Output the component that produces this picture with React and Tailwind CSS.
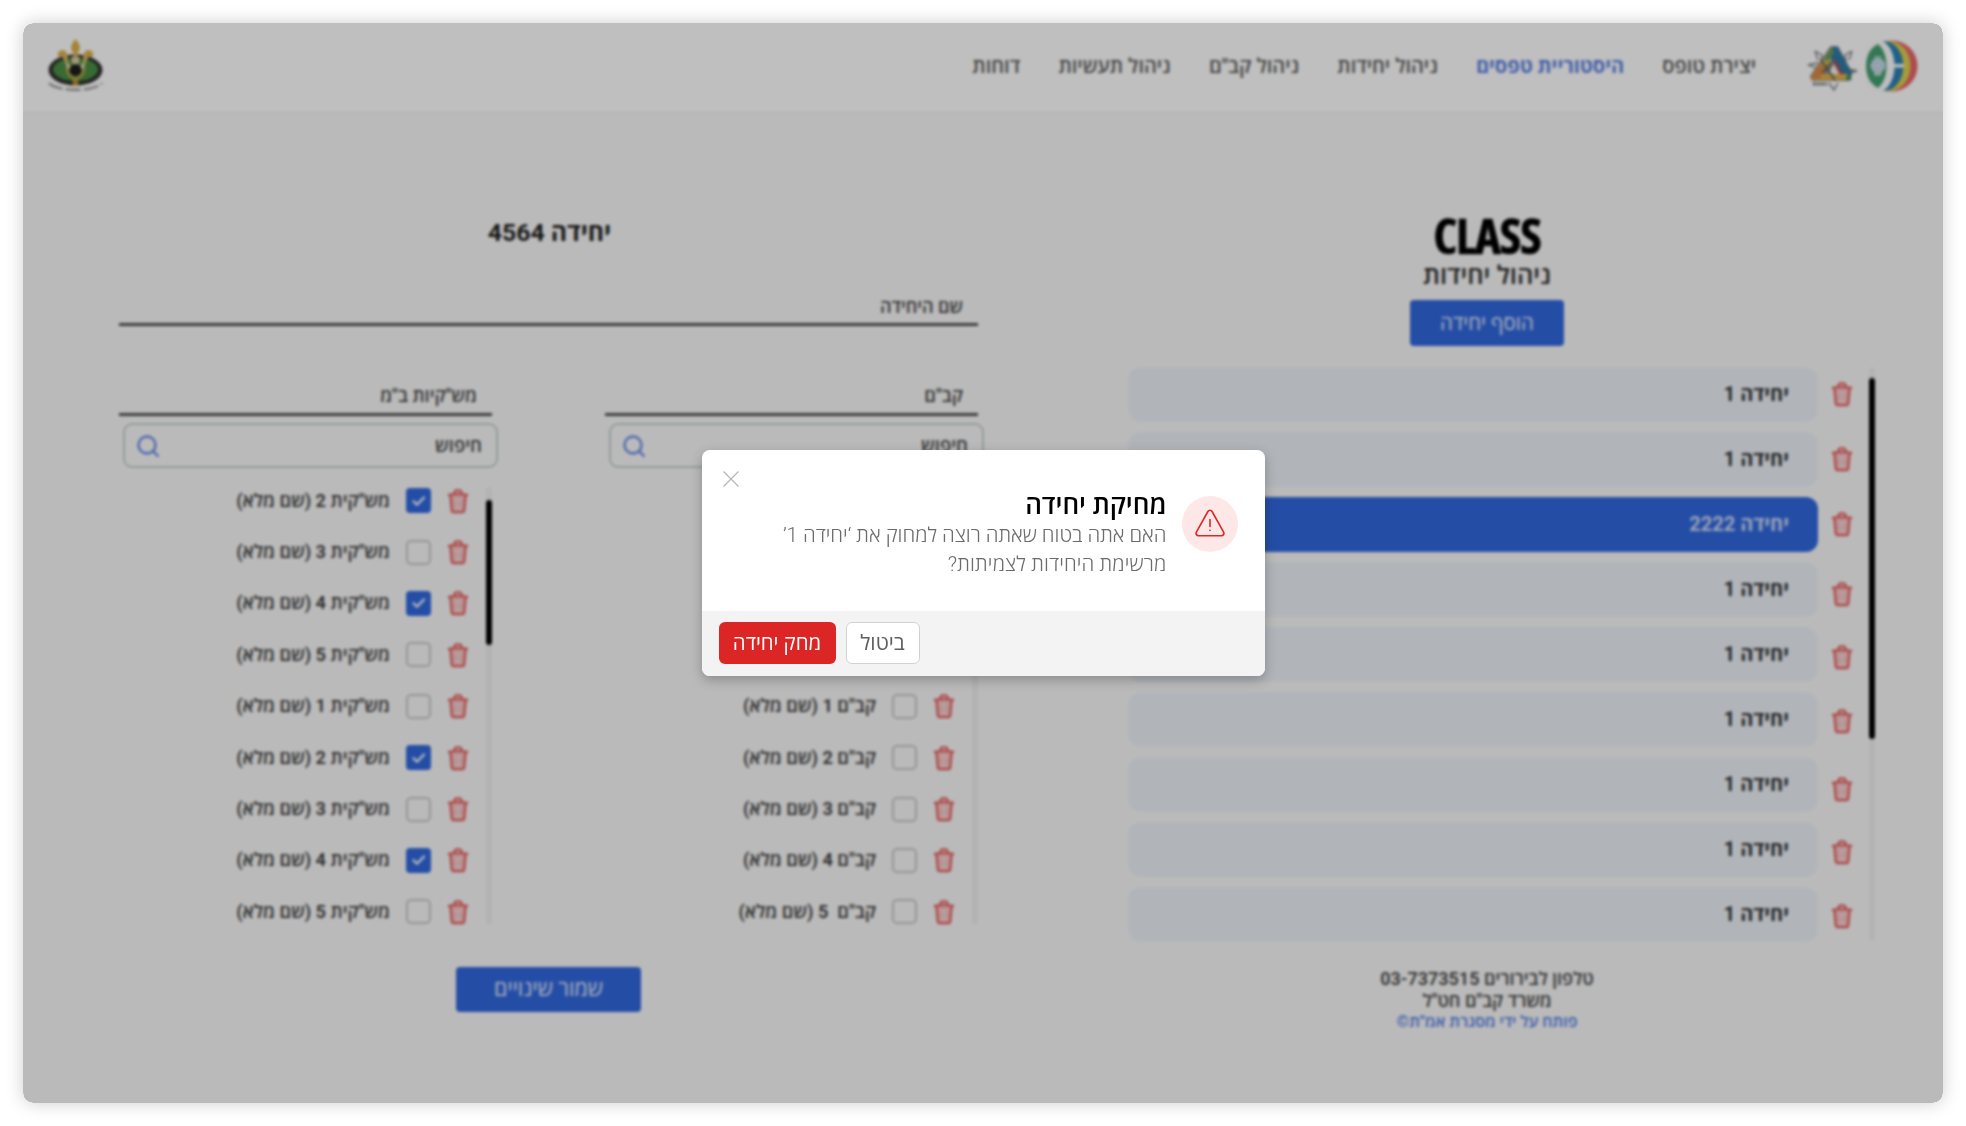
import React from "react";

const NAV = [
  { label: "יצירת טופס" },
  { label: "היסטוריית טפסים", active: true },
  { label: "ניהול יחידות" },
  { label: "ניהול קב\"ם" },
  { label: "ניהול תעשיות" },
  { label: "דוחות" },
];

const UNITS = [
  { name: "יחידה 1", nudge: "mt-[-1px]" },
  { name: "יחידה 1", nudge: "mt-[-1px]" },
  { name: "יחידה 2222", nudge: "mt-[-2px]", selected: true },
  { name: "יחידה 1", nudge: "mt-[8px]" },
  { name: "יחידה 1", nudge: "mt-[4px]" },
  { name: "יחידה 1", nudge: "mt-[2px]" },
  { name: "יחידה 1", nudge: "mt-[8px]" },
  { name: "יחידה 1", nudge: "mt-[4px]" },
  { name: "יחידה 1", nudge: "mt-[2px]" },
];

const NCOS = [
  { name: "מש\"קית 2 (שם מלא)", checked: true },
  { name: "מש\"קית 3 (שם מלא)" },
  { name: "מש\"קית 4 (שם מלא)", checked: true },
  { name: "מש\"קית 5 (שם מלא)" },
  { name: "מש\"קית 1 (שם מלא)" },
  { name: "מש\"קית 2 (שם מלא)", checked: true },
  { name: "מש\"קית 3 (שם מלא)" },
  { name: "מש\"קית 4 (שם מלא)", checked: true },
  { name: "מש\"קית 5 (שם מלא)" },
];

const OFFICERS = [
  { name: "קב\"ם 1 (שם מלא)" },
  { name: "קב\"ם 2 (שם מלא)" },
  { name: "קב\"ם 3 (שם מלא)" },
  { name: "קב\"ם 4 (שם מלא)" },
  { name: "קב\"ם  5 (שם מלא)" },
];

function Trash() {
  return (
    <svg viewBox="0 0 24 26" className="h-[26px] w-6 shrink-0" fill="none">
      <path d="M4.2 7.5 5.6 22a2.6 2.6 0 0 0 2.6 2.2h7.6a2.6 2.6 0 0 0 2.6-2.200L19.8 7.500Z" fill="#f07070" fillOpacity="0.4" />
      <path d="M2.8 6.8c3-.5 6.1-.7 9.2-.7s6.200.2 9.200.7M8.300 5.600c.2-2.300 1-3.200 2.500-3.200h2.400c1.500 0 2.300.9 2.500 3.200M4.500 8l1.200 13.800a2.600 2.600 0 0 0 2.600 2.400h7.400a2.600 2.600 0 0 0 2.600-2.400L19.500 8" stroke="#e85e5e" strokeWidth="2.300" strokeLinecap="round" strokeLinejoin="round" />
      <path d="M9 11.500h6M9 20.500h6M12 11.500v9" stroke="#f6dada" strokeWidth="1.800" strokeLinecap="round" />
    </svg>
  );
}

function SearchIcon() {
  return (
    <svg viewBox="0 0 24 24" className="h-6 w-6" fill="none" stroke="#6488e6" strokeWidth="2.400" strokeLinecap="round">
      <circle cx="11" cy="11" r="8.500" />
      <path d="m17.500 17.500 4.300 4.500" />
    </svg>
  );
}

function Checkbox({ checked }) {
  if (checked) {
    return (
      <span className="flex h-[25px] w-[25px] shrink-0 items-center justify-center rounded-[4px] bg-[#3068de]">
        <svg viewBox="0 0 16 16" className="h-4 w-4" fill="none" stroke="#fff" strokeWidth="2.200" strokeLinecap="round" strokeLinejoin="round">
          <path d="m2.500 8.200 3.500 3.500 7-7.200" />
        </svg>
      </span>
    );
  }
  return <span className="h-[25px] w-[25px] shrink-0 rounded-[5px] border-2 border-[#c6c6c6]" />;
}

function PersonRow({ name, checked }) {
  return (
    <div className="flex h-[51.4px] items-center">
      <Trash />
      <span className="ms-[15px] flex"><Checkbox checked={checked} /></span>
      <span className="ms-[16px] whitespace-pre text-[18.200px] leading-6 font-semibold text-[#3a3a3a]">{name}</span>
    </div>
  );
}

function PeopleColumn({ title, people, thumb, start }) {
  return (
    <div className="w-[379px]">
      <div className="ms-[6px]">
        <div className="ps-[15px] text-[18.200px] leading-6 font-semibold text-[#444]">{title}</div>
        <div className="mt-[5px] h-[3px] bg-[#505050]" />
      </div>
      <div className="mt-[7px] flex h-[45px] w-[375px] items-center justify-between rounded-[9px] border-2 border-[#c8cfcd] ps-[14px] pe-[11px]">
        <span className="text-[18.500px] leading-6 font-semibold text-[#444]">חיפוש</span>
        <SearchIcon />
      </div>
      <div className="mt-[7px] flex h-[463px]">
        <div className="ms-[6px] mt-3 h-[438px] w-[6px] rounded-full bg-[#efefef]">
          {thumb && <div className="mt-[13px] h-[145px] w-[6px] rounded-full bg-black" />}
        </div>
        <div className={start}>
          {people.map((p, i) => <PersonRow key={i} {...p} />)}
        </div>
      </div>
    </div>
  );
}

function RainbowLogo() {
  return (
    <svg viewBox="0 0 52 52" className="h-[52px] w-[52px]">
      <circle cx="26" cy="26" r="25.500" fill="#e8646a" />
      <ellipse cx="22.500" cy="26" rx="22" ry="25.300" fill="#ddd14e" />
      <ellipse cx="18.500" cy="26" rx="18.800" ry="24.800" fill="#2b80b4" />
      <ellipse cx="12" cy="26" rx="16.500" ry="26" fill="#fcfcfc" />
      <path d="M27 24h11v3.500H27z" fill="#fcfcfc" />
      <path d="M12 4C4 8 0 16 0 26s4 18 12 22c5-4 8.500-12 8.500-22S17 8 12 4Z" fill="#45a070" />
      <path d="M12 12l7 14-7 14-8-14Z" fill="#e6f0ea" />
      <path d="M12 5c4 6 4 8 0 13-4-5-4-7 0-13ZM12 47c4-6 4-8 0-13-4 5-4 7 0 13Z" fill="#45a070" />
      <circle cx="12" cy="25.500" r="7" fill="#dbe7ef" stroke="#9dbdd2" strokeWidth="1.400" />
      <circle cx="12" cy="25.500" r="3.200" fill="none" stroke="#9dbdd2" strokeWidth="1.200" />
    </svg>
  );
}

function TriangleLogo() {
  return (
    <svg viewBox="0 0 51 46" className="h-[46px] w-[51px]">
      <g stroke="#6f6f6f" strokeWidth="1.300" fill="none">
        <path d="M8 6l7 4-1 6M8 6l3 9M45 6l-7 4 1 6M45 6l-3 9M1 20l10-2M1 20l8 3M50 26l-10-2M50 26l-9 2M22 38l5 7 4-7" />
      </g>
      <path d="M23.500 1h7.500l14.500 27-3.500 8H5l-2-5Z" fill="#2f2f2f" fillOpacity="0.55" />
      <path d="M24 2 6 32l6 3L30 6Z" fill="#d0b94e" />
      <path d="M26 2l5 .5L45 28l-1.500 7-6 .5L21 9Z" fill="#2f7aa6" />
      <path d="M6 29h36l2 6H3.500Z" fill="#e0b24a" />
      <path d="M3 34 12 19l6 3-5 12Z" fill="#dc8a45" />
      <path d="M24 2l-7 12 4 2 6-9Z" fill="#6a9c5e" />
      <path d="M27 13l9 16H23l4-8Z" fill="#bd4248" />
      <path d="M41 26l4 9h-6Z" fill="#3d8a5e" />
      <path d="M27 19 21.500 29h11Z" fill="#f4f4f4" />
      <path d="M14 15l14 20M15 28l9-10" stroke="#5c5c5c" strokeWidth="1.800" />
      <path d="M6 39h14" stroke="#5c5c5c" strokeWidth="2.400" strokeDasharray="3 1" />
    </svg>
  );
}

function EmblemLogo() {
  return (
    <svg viewBox="0 0 55 56" className="h-14 w-[55px]">
      <ellipse cx="27.500" cy="32" rx="27" ry="15.500" fill="#303030" />
      <ellipse cx="27.500" cy="31.500" rx="22.500" ry="11.500" fill="#4a8f45" />
      <path d="M16 15c2 8 6 10 8 18l-5-3c-1-6-4-9-5-13ZM39 15c-2 8-6 10-8 18l5-3c1-6 4-9 5-13Z" fill="#e6dfca" />
      <path d="M27.500 1c-5.500 6-5.500 10-2 14v8h4v-8c3.500-4 3.500-8-2-14Z" fill="#dcb04a" />
      <path d="M20 20c0-7-6-11-10-5-1 3 1 5 3 4 2-2 3 0 3.500 3l3 6ZM35 20c0-7 6-11 10-5 1 3-1 5-3 4-2-2-3 0-3.500 3l-3 6Z" fill="#dcb04a" />
      <path d="M23 19h9l-1.500 8h-6Z" fill="#d9cba6" />
      <circle cx="27.500" cy="32" r="6" fill="#1c1c1c" />
      <path d="M19 29c0 7 3 10 7 11v7h3v-7c4-1 7-4 7-11" stroke="#d3a63f" strokeWidth="2.200" fill="none" />
      <path d="M1 45c8 9 45 9 53 0" stroke="#9a9a9a" strokeWidth="2.400" strokeDasharray="15 3" fill="none" />
    </svg>
  );
}

function Header() {
  return (
    <header className="flex h-[91px] items-center border-b-2 border-[#eef3f2] bg-white ps-[25px] pe-[25px]">
      <span className="mt-[-3px]"><RainbowLogo /></span>
      <span className="ms-2"><TriangleLogo /></span>
      <nav className="ms-[51px] flex gap-[38.200px] pb-[4px]">
        {NAV.map((n) => (
          <a key={n.label} className={n.active ? "text-[20px] leading-7 font-bold text-[#5a80e2]" : "text-[20px] leading-7 font-semibold text-[#5a5a5a]"}>{n.label}</a>
        ))}
      </nav>
      <span className="ms-auto mt-[-4px]"><EmblemLogo /></span>
    </header>
  );
}

function UnitsPanel() {
  return (
    <section className="w-[776px] pt-[96px]">
      <h1 className="text-center font-['Open_Sans'] text-[49px] leading-[50px] font-bold tracking-[-1px] text-black [font-stretch:75%] [-webkit-text-stroke:0.700px_#000]">CLASS</h1>
      <h2 className="text-center text-[25.500px] leading-[31px] font-semibold text-[#2c2c2c]">ניהול יחידות</h2>
      <button className="mx-auto mt-[9px] flex h-[46px] w-[154px] items-center justify-center rounded-[4px] bg-[#3068de] text-[20.500px] text-[#e6ecfb]">הוסף יחידה</button>
      <div className="mt-[21px] flex h-[574px]">
        <div className="w-[6px] rounded-full bg-[#efefef]">
          <div className="mt-[11px] h-[361px] w-[6px] rounded-full bg-black" />
        </div>
        <div className="ms-[15px] flex flex-col gap-[10px]">
          {UNITS.map((u, i) => (
            <div key={i} className="flex h-[55px] items-center gap-[12px]">
              <span className={u.nudge}><Trash /></span>
              <div className={u.selected
                ? "flex h-[55px] w-[690px] items-center rounded-xl bg-[#3068de] ps-[29px] pb-px text-[20px] font-bold text-[#cfdaf6]"
                : "flex h-[55px] w-[690px] items-center rounded-xl bg-[#edf2f9] ps-[29px] pb-px text-[20px] font-bold text-[#333]"}>{u.name}</div>
            </div>
          ))}
        </div>
      </div>
      <div className="mt-[27px] text-center text-[18px] leading-[22px] font-semibold text-[#444]">
        <p>טלפון לבירורים <span dir="ltr">03-7373515</span></p>
        <p>משרד קב"ם חט"ל</p>
        <p className="text-[16px] leading-5 text-[#4f7be6]">פותח על ידי מסגרת אמ"ת©</p>
      </div>
    </section>
  );
}

function UnitEditor() {
  return (
    <section className="ms-[115px] w-[865px] pt-[99px]">
      <div className="ms-[6px]">
        <h2 className="-ms-[2px] text-center text-[24.800px] leading-10 font-bold text-[#1f1f1f]">יחידה 4564</h2>
        <div className="mt-[42px] ps-[15px] text-[18px] leading-6 font-semibold text-[#444]">שם היחידה</div>
        <div className="mt-[4px] h-[3px] bg-[#505050]" />
      </div>
      <div className="mt-[58px] flex gap-[107px]">
        <PeopleColumn title={"קב\"ם"} people={OFFICERS} start="ms-[16px] pt-[205.600px]" />
        <PeopleColumn title={"מש\"קיות ב\"מ"} people={NCOS} start="ms-[16px]" thumb />
      </div>
      <div className="ms-[6px] mt-[29px] flex justify-center">
        <button className="h-[45px] w-[185px] rounded-[4px] bg-[#3068de] text-[21.500px] text-[#e6ecfb]">שמור שינויים</button>
      </div>
    </section>
  );
}

function DeleteDialog() {
  return (
    <div role="dialog" className="relative flex h-[226px] w-[563px] flex-col overflow-hidden rounded-lg bg-white">
      <button className="absolute top-[21px] left-[21px]">
        <svg viewBox="0 0 16 16" className="h-4 w-4" stroke="#b5b5b5" strokeWidth="1.200"><path d="M.5.5l15 15M15.500.5l-15 15" /></svg>
      </button>
      <div className="flex flex-1 items-start ps-[27px] pt-[40px]">
        <span className="mt-[6px] flex h-14 w-14 items-center justify-center rounded-full bg-[#fee7e7]">
          <svg viewBox="0 0 30 28" className="mb-[2px] h-7 w-[30px]" fill="none" stroke="#dc2727" strokeWidth="1.600" strokeLinecap="round" strokeLinejoin="round">
            <path d="M12.900 2.500 1.400 23.100A2.400 2.400 0 0 0 3.500 26.700h23a2.400 2.400 0 0 0 2.100-3.600L17.100 2.500a2.400 2.400 0 0 0-4.200 0Z" />
            <path d="M15 10.500v7M15 21.200v.2" />
          </svg>
        </span>
        <div className="ms-[15px]">
          <h3 className="text-[26px] leading-[31px] font-semibold text-black">מחיקת יחידה</h3>
          <p className="text-[20.500px] leading-[29px] font-light text-[#6b6b6b]">
            האם אתה בטוח שאתה רוצה למחוק את ‘יחידה 1’<br /><span className="tracking-[0.15px]">מרשימת היחידות לצמיתות?</span>
          </p>
        </div>
      </div>
      <div dir="ltr" className="flex h-[65px] gap-[10px] bg-[#f3f3f3] pt-[11px] pl-[17px]">
        <button dir="rtl" className="h-[42px] w-[117px] rounded-md bg-[#dc2626] pt-px text-[20.400px] text-white">מחק יחידה</button>
        <button dir="rtl" className="h-[42px] w-[74px] rounded-md border border-[#d2d2d2] bg-white pt-[2px] text-[21px] text-[#5f5f5f]">ביטול</button>
      </div>
    </div>
  );
}

export default function App() {
  return (
    <div dir="rtl" className="h-[1126px] w-[1966px] overflow-hidden bg-white p-[23px] font-[Roboto,'Open_Sans',sans-serif]">
      <div className="relative h-[1080px] w-[1920px] overflow-hidden rounded-[10px] bg-[#f9f9f9] shadow-[0_0_18px_rgba(0,0,0,0.2)]">
        <Header />
        <main className="flex ps-[68px]">
          <UnitsPanel />
          <UnitEditor />
        </main>
        <div className="absolute inset-0 rounded-[10px] bg-black/25 backdrop-blur-[1.800px]" />
        <div className="absolute inset-0 flex items-center justify-center">
          <div className="rounded-lg shadow-[0_4px_12px_rgba(0,0,0,0.25)]">
            <DeleteDialog />
          </div>
        </div>
      </div>
    </div>
  );
}
